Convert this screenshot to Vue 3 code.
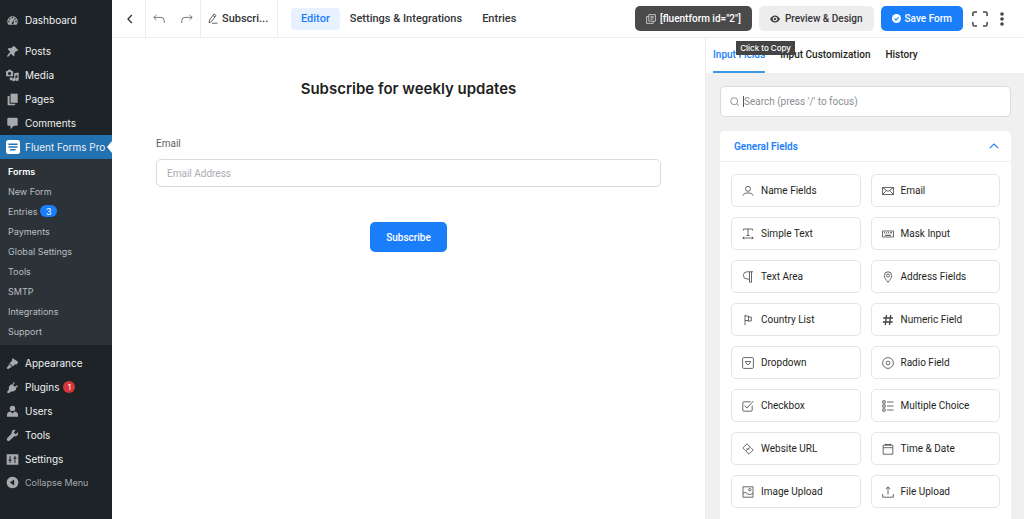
<script setup>
import { ref } from 'vue'

const topMenu = [
  { label: 'Dashboard', icon: '<path fill-rule="evenodd" d="M3.8 16.5A8 8 0 1 1 16.2 16.5zM9 4.5h2v2H9zM5 6.5h2v2H5zM13 6.500h2v2h-2zM3.500 10.500h2v2h-2zM14.500 10.500h2v2h-2zM9 15.500a1.700 1.700 0 0 0 2.500-1L13 8.500l-3.500 4.500a1.700 1.700 0 0 0-.5 2.500z"/>' },
  { label: 'Posts', icon: '<path d="M10.400 3L12 1l7 7-2 1.600-1.200-.3-2.900 2.900.4 3.600-1.700 1.600-3.900-3.900L3 18.500 1.500 17l5-6.700L2.600 6.400l1.600-1.700 3.600.4 2.900-2.900z"/>' },
  { label: 'Media', icon: '<path fill-rule="evenodd" d="M0 3h2.500l1-2h4l1 2H11v8H0zM5.500 4.500a2.500 2.500 0 1 0 .01 0z"/><path d="M12.500 6.500l7-1v10.500a2.500 2.500 0 1 1-2-2.500V9.500l-3 .5v6.500a2.500 2.500 0 1 1-2-2.500z"/><circle cx="8" cy="15" r="2.500"/>' },
  { label: 'Pages', icon: '<path d="M7 1h11v14H7z"/><path d="M2.500 4.500h3v12H14v2.500H2.500z"/>' },
  { label: 'Comments', icon: '<path d="M4 1h12a2 2 0 0 1 2 2v8.500a2 2 0 0 1-2 2h-4l-5 5.500v-5.500H4a2 2 0 0 1-2-2V3a2 2 0 0 1 2-2z"/>' },
]

const subMenu = [
  { label: 'Forms', current: true },
  { label: 'New Form' },
  { label: 'Entries', count: 3 },
  { label: 'Payments' },
  { label: 'Global Settings' },
  { label: 'Tools' },
  { label: 'SMTP' },
  { label: 'Integrations' },
  { label: 'Support' },
]

const bottomMenu = [
  { label: 'Appearance', icon: '<path d="M10 1.500l9 6-3 4.500-2-1-3.500 3.500-5-5L9 6z"/><path d="M4.500 10.500L9.500 15.500 7 16 3 19 1 17l3-4z"/>' },
  { label: 'Plugins', count: 1, icon: '<path d="M12 1.500l1.500 1.500L11 6.500l2.500 2.500L17 6.500 18.500 8l-3.400 2.800.7 1.200c-1.500 3.300-4.500 4.800-7.800 4L5 18.500 2 18.500v-2.500l2.500-3C3.500 9.500 5.500 6.500 8.500 5l1.500.7z"/>' },
  { label: 'Users', icon: '<circle cx="10" cy="5.200" r="4.200"/><path d="M1.500 18v-3c0-3 2.500-5 5.500-5l3 3 3-3c3 0 5.500 2 5.500 5v3z"/>' },
  { label: 'Tools', icon: '<path d="M18.500 5l-3.700 3-3-2.700L14.800 1.500c-3.800-1-6.800 1.500-6.200 5.500L1.500 14.500c-1.200 2.300 1.500 5 3.800 3.700L12.500 11.300c4 .7 7-2.300 6-6.300z"/>' },
  { label: 'Settings', icon: '<path fill-rule="evenodd" d="M1 2h18v16H1zM5.500 4.500H7V10h1.500v2H7v3.500H5.500V12H4v-2h1.500zM13 4.500h1.500V7H16v2h-1.500v6.500H13V9h-1.500V7H13z"/>' },
]

const tabs = ['Editor', 'Settings & Integrations', 'Entries']
const panelTabs = ['Input Fields', 'Input Customization', 'History']

const fields = [
  { label: 'Name Fields', icon: '<circle cx="6" cy="3.800" r="2.500"/><path d="M.8 10.500c1-2 3-2.600 5.200-2.600s4.200.6 5.200 2.600"/>' },
  { label: 'Email', icon: '<path d="M.5 2.500h11v7H.5zM.5 2.500L6 6.500l5.500-4M.5 9.500l4-4M11.500 9.500l-4-4"/>' },
  { label: 'Simple Text', icon: '<path d="M1.500 2.500V1h9v1.500M6 1v6.500M4.500 7.500h3M.8 10h10.400M2.200 8.800L.8 10l1.400 1.200M9.800 8.800l1.400 1.200-1.400 1.200"/>' },
  { label: 'Mask Input', icon: '<path d="M.5 3h11v6H.5zM2 4.600h1M4 4.600h1M6 4.600h1M8 4.600h2M2.500 6h1M4.500 6h1M6.500 6h1M8.500 6h1M3 7.500h6"/>' },
  { label: 'Text Area', icon: '<path d="M11 .8H5a3.600 3.600 0 0 0 0 7.200h2.500M7.500.8v10.400M9.500.8v10.400M7.500 11.200h2"/>' },
  { label: 'Address Fields', icon: '<path d="M6 11.300C4 8.800 2.300 6.800 2.300 4.500a3.700 3.700 0 0 1 7.400 0c0 2.300-1.700 4.300-3.700 6.800z"/><circle cx="6" cy="4.600" r="1.500"/>' },
  { label: 'Country List', icon: '<path d="M3 .8v10.400M3 2h3.500v4.500H3M6.500 3h2.800v4H5.500"/>' },
  { label: 'Numeric Field', icon: '<path stroke-width="1.300" d="M4.500 1L3.300 11M8.700 1L7.500 11M1.200 4h9.800M.8 8h9.800"/>' },
  { label: 'Dropdown', icon: '<rect x=".6" y=".6" width="10.800" height="10.800" rx="1.200"/><path d="M3.300 4.500h5.400L7.300 7 6 7.800 4.700 7z"/>' },
  { label: 'Radio Field', icon: '<circle cx="6" cy="6" r="5.400"/><circle cx="6" cy="6" r="1.900"/>' },
  { label: 'Checkbox', icon: '<path d="M8.500 1.800H2A1.200 1.200 0 0 0 .8 3v7A1.200 1.200 0 0 0 2 11.200h7A1.200 1.200 0 0 0 10.200 10V5.500M2.500 5.500l2.500 2.600L11.300 1"/>' },
  { label: 'Multiple Choice', icon: '<path d="M.8.8h2.400v2.400H.8zM.8 4.800h2.400v2.400H.8zM.8 8.800h2.400v2.400H.8zM5 2h6.500M5 6h6.500M5 10h6.500"/>' },
  { label: 'Website URL', icon: '<path d="M3.300 7.500L.8 5 5 .8 8.200 4 5.800 6.500 4.600 5.300M8.700 4.500L11.200 7 7 11.200 3.800 8 6.200 5.500l1.200 1.200"/>' },
  { label: 'Time & Date', icon: '<path d="M1.200 2.200h9.600v9H1.200zM1.200 4.700h9.600M3.500.6v2M8.500.6v2M3.500 1.500h5"/>' },
  { label: 'Image Upload', icon: '<path d="M1 .8h10v10.400H1zM1 7.500c1.600-1.300 2.600-1.300 4 0s3.500 1.500 6-.3"/><circle cx="7.800" cy="3.700" r="1.200"/>' },
  { label: 'File Upload', icon: '<path d="M.6 8v3.200h10.800V8M6 8.500V1M3.800 3L6 .8 8.200 3"/>' },
]

const activeTab = ref('Editor')
const activePanel = ref('Input Fields')
const search = ref('')
const email = ref('')
</script>

<template>
  <div class="page">
    <nav class="sidebar" aria-label="Admin">
      <a v-for="(item, i) in topMenu" :key="item.label" href="#" class="menu-item" :class="{ first: i === 0 }">
        <svg class="menu-icon" viewBox="0 0 20 20" v-html="item.icon" />
        {{ item.label }}
      </a>
      <a href="#" class="menu-item active">
        <svg class="brand-icon" viewBox="0 0 14 14">
          <rect width="14" height="14" rx="2.500" fill="#fff" />
          <path d="M2.500 3.500h9v1.600h-9zM2.500 6.200h9v1.600h-9zM4 9h6a2 2 0 0 1-2 1.600H4z" fill="#2271b1" />
        </svg>
        Fluent Forms Pro
      </a>
      <div class="submenu">
        <a v-for="item in subMenu" :key="item.label" href="#" class="sub-item" :class="{ current: item.current }">
          {{ item.label }}<span v-if="item.count" class="count blue">{{ item.count }}</span>
        </a>
      </div>
      <a v-for="item in bottomMenu" :key="item.label" href="#" class="menu-item">
        <svg class="menu-icon" viewBox="0 0 20 20" v-html="item.icon" />
        {{ item.label }}<span v-if="item.count" class="count red">{{ item.count }}</span>
      </a>
      <button type="button" class="menu-item collapse">
        <svg class="menu-icon" viewBox="0 0 20 20">
          <path fill-rule="evenodd" d="M10 1a9 9 0 1 0 .01 0zM12.500 5.500v9L6 10z" />
        </svg>
        Collapse Menu
      </button>
    </nav>

    <div class="workspace">
      <header class="topbar">
        <button type="button" class="cell back" aria-label="Back">
          <svg width="8" height="10" viewBox="0 0 8 10"><path d="M5.800 1L2 5l3.800 4" fill="none" stroke="#333" stroke-width="1.300" /></svg>
        </button>
        <div class="cell history">
          <button type="button" aria-label="Undo">
            <svg width="12" height="10" viewBox="0 0 12 10"><path d="M3.500.8L.8 3.400l2.700 2.600M.8 3.400H8A3.200 3.200 0 0 1 11.200 6.600V9" /></svg>
          </button>
          <button type="button" aria-label="Redo">
            <svg width="12" height="10" viewBox="0 0 12 10"><path d="M8.500.8l2.700 2.600L8.500 6M11.200 3.400H4A3.200 3.200 0 0 0 .8 6.600V9" /></svg>
          </button>
        </div>
        <button type="button" class="cell rename">
          <svg width="10" height="11" viewBox="0 0 10 11"><path d="M1.500 7L6 1l2 1.500L3.500 8.500 1 9.800zM5 2.500l2 1.500M4 10.200h5.500" fill="none" stroke="#555" stroke-width=".9" /></svg>
          Subscri...
        </button>
        <nav class="tabs" aria-label="Form">
          <a v-for="t in tabs" :key="t" href="#" :class="{ on: t === activeTab }" @click.prevent="activeTab = t">{{ t }}</a>
        </nav>
        <div class="actions">
          <button type="button" class="btn dark">
            <svg width="10" height="10" viewBox="0 0 10 10"><path d="M2.800.6h6.600v6.600H2.800zM2.800 2.500H.6v6.900h6.600V7.200M4.500 2.700h3.200M4.500 4h3.200M4.500 5.300h2" fill="none" stroke="#ddd" stroke-width=".8" /></svg>
            [fluentform id="2"]
            <span class="tip" role="tooltip">Click to Copy</span>
          </button>
          <button type="button" class="btn light">
            <svg width="10" height="8" viewBox="0 0 10 8"><path fill-rule="evenodd" fill="#3c3c3c" d="M0 4C1.200 1.600 3 .4 5 .4S8.800 1.600 10 4C8.800 6.400 7 7.600 5 7.600S1.200 6.400 0 4zM5 1.700a2.300 2.300 0 1 0 .01 0zM5 2.800a1.200 1.200 0 1 1-.01 0z" /></svg>
            Preview &amp; Design
          </button>
          <button type="button" class="btn primary">
            <svg width="9" height="9" viewBox="0 0 9 9"><circle cx="4.500" cy="4.500" r="4.500" fill="#fff" /><path d="M2.500 4.600l1.500 1.400L6.600 3.300" fill="none" stroke="#1a7efb" stroke-width="1.100" /></svg>
            Save Form
          </button>
          <button type="button" class="icon-btn" aria-label="Full screen">
            <svg width="16" height="16" viewBox="0 0 16 16"><path d="M5 .9H2.500A1.600 1.600 0 0 0 .9 2.500V5M11 .9h2.500a1.600 1.600 0 0 1 1.600 1.600V5M5 15.100H2.500a1.600 1.600 0 0 1-1.600-1.600V11M11 15.100h2.500a1.600 1.600 0 0 0 1.600-1.600V11" fill="none" stroke="#444" stroke-width="1.500" /></svg>
          </button>
          <button type="button" class="icon-btn more" aria-label="More">
            <svg width="4" height="14" viewBox="0 0 4 14" fill="#444"><circle cx="2" cy="2" r="1.800" /><circle cx="2" cy="7" r="1.800" /><circle cx="2" cy="12" r="1.800" /></svg>
          </button>
        </div>
      </header>

      <div class="body">
        <main class="canvas">
          <h1>Subscribe for weekly updates</h1>
          <label for="email">Email</label>
          <input id="email" v-model="email" type="email" placeholder="Email Address" />
          <button type="button" class="submit">Subscribe</button>
        </main>

        <aside class="panel">
          <nav class="panel-tabs" aria-label="Panel">
            <a v-for="t in panelTabs" :key="t" href="#" :class="{ on: t === activePanel }" @click.prevent="activePanel = t">{{ t }}</a>
          </nav>
          <div class="panel-body">
            <label class="search">
              <svg width="9" height="9" viewBox="0 0 9 9"><circle cx="4.200" cy="4.200" r="3.500" fill="none" stroke="#777" stroke-width=".8" /><path d="M6.700 6.700l2 2" stroke="#777" stroke-width=".8" /></svg>
              <span class="caret"></span>
              <input v-model="search" type="text" aria-label="Search fields" placeholder="Search (press '/' to focus)" />
            </label>
            <section class="card">
              <button type="button" class="card-head">
                General Fields
                <svg width="10" height="6" viewBox="0 0 10 6"><path d="M.8 5.200L5 1l4.200 4.200" fill="none" stroke="#1a7efb" stroke-width="1.100" /></svg>
              </button>
              <div class="grid">
                <button v-for="f in fields" :key="f.label" type="button" class="field">
                  <svg width="12" height="12" viewBox="0 0 12 12" v-html="f.icon" />
                  {{ f.label }}
                </button>
              </div>
            </section>
          </div>
        </aside>
      </div>
    </div>
  </div>
</template>

<style>
body {
  background: #fff;
}
</style>

<style scoped>
.page {
  display: flex;
  min-height: 100vh;
  font-family: Inter, "Liberation Sans", sans-serif;
  font-size: 10px;
  color: #353537;
}
.page * {
  box-sizing: border-box;
}
button {
  font: inherit;
  color: inherit;
  background: none;
  border: 0;
  padding: 0;
  cursor: pointer;
}
a {
  color: inherit;
  text-decoration: none;
}
svg {
  flex: none;
}

.sidebar {
  flex: none;
  width: 112px;
  padding-top: 8px;
  background: #1d2327;
}
.menu-item {
  position: relative;
  display: flex;
  align-items: center;
  gap: 6px;
  height: 24px;
  padding-left: 6px;
  color: #f0f0f1;
  white-space: nowrap;
}
.menu-item.first {
  margin-bottom: 7px;
}
.menu-icon {
  width: 13px;
  height: 13px;
  fill: #a7aaad;
}
.brand-icon {
  width: 14px;
  height: 14px;
}
.menu-item.active {
  gap: 5px;
  background: #2271b1;
}
.menu-item.active::after {
  content: "";
  position: absolute;
  right: 0;
  top: 6px;
  border: 6px solid transparent;
  border-left-width: 0;
  border-right: 5px solid #fff;
}
.submenu {
  display: flex;
  flex-direction: column;
  margin-bottom: 6px;
  padding: 2px 0 4px;
  background: #2c3338;
}
.sub-item {
  display: flex;
  align-items: center;
  height: 20px;
  padding-left: 8px;
  font-size: 9px;
  color: #b9bdc1;
}
.sub-item.current {
  font-weight: 600;
  color: #fff;
}
.count {
  display: flex;
  align-items: center;
  justify-content: center;
  height: 12px;
  border-radius: 6px;
  color: #fff;
  font-size: 9px;
}
.count.blue {
  width: 17px;
  margin-left: 3px;
  background: #1a7efb;
}
.count.red {
  width: 12px;
  font-size: 8px;
  margin-left: -2px;
  background: #d63638;
}
.collapse {
  height: 22px;
  font-size: 9px;
  color: #a7aaad;
}

.workspace {
  flex: 1;
  min-width: 0;
  display: flex;
  flex-direction: column;
  font-family: Roboto, "Liberation Sans", sans-serif;
}
.topbar {
  display: flex;
  align-items: stretch;
  height: 38px;
  border-bottom: 1px solid #ececec;
  font-size: 11px;
  font-weight: 500;
}
.cell {
  display: flex;
  align-items: center;
  border-right: 1px solid #ececec;
}
.back {
  width: 34px;
  padding-left: 14px;
}
.history {
  width: 55px;
  justify-content: space-between;
  padding: 0 7px;
}
.history button {
  display: flex;
}
.history path {
  fill: none;
  stroke: #777;
  stroke-width: 1;
}
.rename {
  width: 77px;
  gap: 4px;
  padding-left: 7px;
  white-space: nowrap;
}
.tabs {
  display: flex;
  align-items: center;
  margin-left: 13px;
}
.tabs a {
  padding: 0 10px;
  line-height: 22px;
  border-radius: 4px;
  white-space: nowrap;
}
.tabs .on {
  background: #e8f2ff;
  color: #1a7efb;
}
.actions {
  display: flex;
  align-items: center;
  gap: 7px;
  margin-left: auto;
  padding-right: 20px;
  font-size: 10px;
}
.btn {
  position: relative;
  display: flex;
  align-items: center;
  justify-content: center;
  gap: 4px;
  height: 25px;
  padding: 0 11px;
  border-radius: 5px;
  white-space: nowrap;
}
.dark {
  background: #4a4a4a;
  color: #fff;
}
.light {
  background: #ededed;
  gap: 5px;
}
.primary {
  background: #1a7efb;
  color: #fff;
}
.icon-btn {
  display: flex;
  margin-left: 2px;
}
.more {
  margin-left: 5px;
}
.tip {
  position: absolute;
  z-index: 2;
  top: 35px;
  right: -43px;
  padding: 0 4px;
  background: #444;
  color: #fff;
  font-family: Inter, "Liberation Sans", sans-serif;
  font-size: 8px;
  line-height: 14px;
}

.body {
  flex: 1;
  display: flex;
}
.canvas {
  flex: 1;
  display: flex;
  flex-direction: column;
  padding: 40px 44px;
}
h1 {
  margin: 0;
  font-family: Inter, "Liberation Sans", sans-serif;
  font-size: 15px;
  font-weight: 600;
  line-height: 22px;
  text-align: center;
  color: #1e1f21;
}
.canvas label {
  margin-top: 37px;
  line-height: 14px;
  color: #606266;
}
.canvas input {
  height: 28px;
  margin-top: 8px;
  padding: 0 10px;
  border: 1px solid #dadbdd;
  border-radius: 5px;
  font: inherit;
}
input::placeholder {
  color: #a8abb2;
  opacity: 1;
}
.submit {
  align-self: center;
  height: 30px;
  margin-top: 35px;
  padding: 0 16px;
  border-radius: 5px;
  background: #1a7efb;
  color: #fff;
  font-weight: 500;
}

.panel {
  flex: none;
  width: 319px;
  display: flex;
  flex-direction: column;
  border-left: 1px solid #ececec;
}
.panel-tabs {
  display: flex;
  gap: 15px;
  height: 35px;
  padding-left: 7px;
  font-weight: 500;
  color: #1e1f21;
}
.panel-tabs a {
  line-height: 33px;
  border-bottom: 2px solid transparent;
  white-space: nowrap;
}
.panel-tabs .on {
  color: #1a7efb;
  border-color: #3f97e8;
}
.panel-body {
  flex: 1;
  display: flex;
  flex-direction: column;
  gap: 14px;
  padding: 13px 13px 0 14px;
  background: #f0f0f0;
}
.search {
  display: flex;
  align-items: center;
  height: 31px;
  padding: 0 9px;
  background: #fff;
  border: 1px solid #dadbdd;
  border-radius: 5px;
}
.caret {
  width: 1px;
  height: 11px;
  margin-left: 4px;
  background: #555;
}
.search input {
  flex: 1;
  min-width: 0;
  padding: 0;
  border: 0;
  outline: 0;
  font: inherit;
  background: none;
}
.search input::placeholder {
  color: #8c8f94;
}
.card {
  flex: 1;
  background: #fff;
  border-radius: 5px 5px 0 0;
}
.card-head {
  display: flex;
  align-items: center;
  justify-content: space-between;
  width: 100%;
  height: 31px;
  padding: 0 12px 0 14px;
  border-bottom: 1px solid #efefef;
  color: #1a7efb;
  font-weight: 600;
}
.grid {
  display: grid;
  grid-template-columns: 1fr 1fr;
  gap: 10px;
  padding: 12px 11px 11px;
}
.field {
  display: flex;
  align-items: center;
  gap: 7px;
  height: 33px;
  padding-left: 10px;
  border: 1px solid #e4e5e7;
  border-radius: 5px;
  color: #1e1f21;
  white-space: nowrap;
}
.field svg {
  fill: none;
  stroke: #444;
  stroke-width: .8;
}
</style>
